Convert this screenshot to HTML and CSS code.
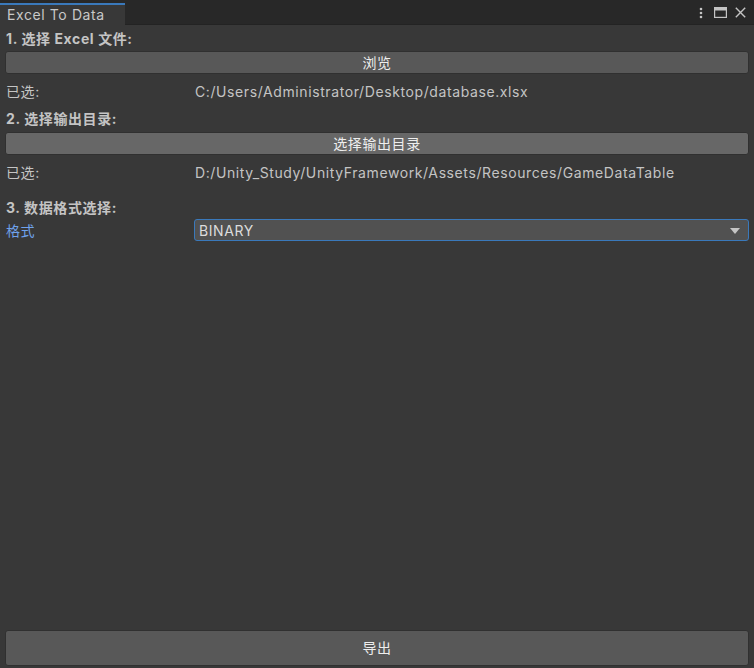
FILE: index.html
```html
<!DOCTYPE html>
<html lang="zh-CN">
<head>
<meta charset="utf-8">
<title>Excel To Data</title>
<link rel="stylesheet" href="styles.css">
</head>
<body>
<div class="window">
  <div class="titlebar">
    <div class="tab">Excel To Data</div>
    <div class="win-icons">
      <svg class="ic ic-more" width="6" height="12" viewBox="0 0 6 12"><circle cx="3" cy="2" r="1.3"/><circle cx="3" cy="6" r="1.3"/><circle cx="3" cy="10" r="1.3"/></svg>
      <svg class="ic ic-max" width="13" height="11" viewBox="0 0 13 11"><rect x="0.6" y="0.6" width="11.8" height="9.8" fill="none" stroke="#c4c4c4" stroke-width="1.2"/><rect x="0.5" y="0.5" width="12" height="3" fill="#c4c4c4"/></svg>
      <svg class="ic" width="11" height="11" viewBox="0 0 11 11"><path d="M0.8 0.8 L10.2 10.2 M10.2 0.8 L0.8 10.2" stroke="#c4c4c4" stroke-width="1.4" fill="none"/></svg>
    </div>
  </div>
  <div class="content">
    <div class="section-title s1">1. 选择 Excel 文件:</div>
    <button class="btn btn-top">浏览</button>
    <div class="field-row">
      <span class="field-label">已选:</span>
      <span class="field-value">C:/Users/Administrator/Desktop/database.xlsx</span>
    </div>
    <div class="section-title s2">2. 选择输出目录:</div>
    <button class="btn btn-top btn-hover">选择输出目录</button>
    <div class="field-row">
      <span class="field-label">已选:</span>
      <span class="field-value">D:/Unity_Study/UnityFramework/Assets/Resources/GameDataTable</span>
    </div>
    <div class="section-title s3">3. 数据格式选择:</div>
    <div class="field-row format-row">
      <span class="field-label focused">格式</span>
      <div class="dropdown">
        <span>BINARY</span>
        <svg class="arrow" width="10" height="6" viewBox="0 0 10 6"><path d="M0 0 L10 0 L5 6 Z" fill="#c4c4c4"/></svg>
      </div>
    </div>
    <div class="spacer"></div>
    <button class="btn btn-export">导出</button>
  </div>
</div>
</body>
</html>
```

FILE: styles.css
```css
* { box-sizing: border-box; }
html, body {
  margin: 0;
  padding: 0;
  height: 100%;
  background: #383838;
}
body {
  font-family: Inter, "Noto Sans CJK SC", sans-serif;
  font-size: 14px;
  letter-spacing: 0.6px;
  color: #c4c4c4;
}
.window {
  display: flex;
  flex-direction: column;
  height: 100vh;
}
.titlebar {
  height: 25px;
  background: #282828;
  display: flex;
  align-items: flex-end;
  justify-content: space-between;
  border-bottom: 1px solid #232323;
}
.tab {
  width: 125px;
  height: 22px;
  background: #383838;
  border-top: 2px solid #3a79bb;
  padding-left: 7px;
  line-height: 20px;
  color: #c8c8c8;
  margin-bottom: -1px;
}
.win-icons {
  display: flex;
  align-items: center;
  height: 25px;
  padding-right: 8px;
  align-self: flex-start;
}
.ic { display: block; fill: #c4c4c4; }
.ic-more { margin-right: 10px; }
.ic-max { margin-right: 8px; }
.content {
  flex: 1;
  display: flex;
  flex-direction: column;
  padding: 0 5px 2px 5px;
}
.section-title {
  height: 20px;
  line-height: 20px;
  font-weight: 700;
  padding-left: 1px;
}
.s1 { margin-top: 4px; }
.s2 { margin-top: 10px; }
.s3 { margin-top: 18px; }
.btn {
  display: block;
  width: 100%;
  font-family: Inter, "Noto Sans CJK SC", sans-serif;
  font-size: 14px;
  letter-spacing: 0.6px;
  color: #eeeeee;
  background: #585858;
  border: 1px solid #303030;
  border-radius: 3px;
  padding: 0;
  text-align: center;
}
.btn-top {
  height: 23px;
  line-height: 21px;
  margin-top: 2px;
}
.s2 + .btn-top { margin-top: 3px; }
.btn-hover { background: #676767; }
.field-row {
  display: grid;
  grid-template-columns: 189px 1fr;
  align-items: center;
  height: 18px;
  margin-top: 7px;
}
.field-label { padding-left: 1px; }
.field-value { padding-left: 1px; }
.focused { color: #6fa2ec; }
.format-row {
  height: 22px;
  margin-top: 1px;
}
.dropdown {
  height: 22px;
  background: #515151;
  border: 1px solid #3a79bb;
  border-radius: 3px;
  display: flex;
  align-items: center;
  justify-content: space-between;
  padding: 0 8px 0 4px;
  color: #dcdcdc;
}
.arrow { display: block; margin-top: 1px; }
.spacer { flex: 1; }
.btn-export {
  height: 36px;
  line-height: 34px;
}
```
